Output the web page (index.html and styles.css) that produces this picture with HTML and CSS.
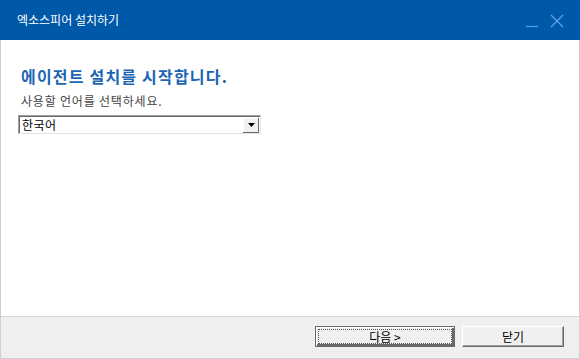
FILE: index.html
```html
<!DOCTYPE html>
<html>
<head>
	<meta charset="utf-8">
	<title>엑소스피어 설치하기</title>
	<link rel="stylesheet" href="styles.css">
</head>
<body>
	<div class="window">
		<div class="titlebar">
			<span class="title">엑소스피어 설치하기</span>
			<div class="controls">
				<svg class="ctl" width="14" height="14" viewBox="0 0 14 14"><line x1="1" y1="12.5" x2="13" y2="12.5" stroke="#5aa3ee" stroke-width="1.2"/></svg>
				<svg class="ctl" width="14" height="14" viewBox="0 0 14 14"><line x1="1" y1="1" x2="13" y2="13" stroke="#5aa3ee" stroke-width="1.3"/><line x1="13" y1="1" x2="1" y2="13" stroke="#5aa3ee" stroke-width="1.3"/></svg>
			</div>
		</div>
		<div class="body">
			<div class="content">
				<h1 class="heading">에이전트 설치를 시작합니다.</h1>
				<p class="hint">사용할 언어를 선택하세요.</p>
				<div class="dropdown">
					<span class="value">한국어</span>
					<span class="arrow"><svg width="7" height="4" viewBox="0 0 7 4"><polygon points="0,0 7,0 3.5,4" fill="#000"/></svg></span>
				</div>
			</div>
			<div class="footer">
				<button class="btn btn-default"><span class="focus">다음 &gt;</span></button>
				<button class="btn btn-close">닫기</button>
			</div>
		</div>
	</div>
</body>
</html>
```

FILE: styles.css
```css
body {
	margin: 0;
	background: #fff;
	font-family: "Noto Sans CJK KR", "Noto Sans", sans-serif;
}

.window {
	width: 580px;
	height: 359px;
	display: flex;
	flex-direction: column;
}

.titlebar {
	height: 40px;
	flex: none;
	background: #0058a9;
	display: flex;
	align-items: center;
	justify-content: space-between;
	padding: 0 16px 0 17px;
	box-sizing: border-box;
}

.title {
	color: #fff;
	font-size: 12px;
	padding-bottom: 1px;
}

.controls {
	display: flex;
	gap: 11px;
	padding-top: 1px;
}

.body {
	flex: 1;
	display: flex;
	flex-direction: column;
	border: 1px solid #cfcfcf;
	border-top: none;
}

.content {
	flex: 1;
	background: #fff;
	padding: 25px 0 0 17px;
}

.heading {
	margin: 0 0 0 3px;
	font-size: 16px;
	font-weight: bold;
	color: #1c64b4;
	line-height: 22px;
	letter-spacing: 1.2px;
}

.hint {
	margin: 6px 0 0 3px;
	font-size: 12px;
	color: #444;
	line-height: 16px;
	letter-spacing: 0.8px;
}

.dropdown {
	margin-top: 6px;
	width: 243px;
	height: 19px;
	box-sizing: border-box;
	border-top: 1px solid #a0a0a0;
	border-left: 1px solid #a0a0a0;
	border-right: 1px solid #e3e3e3;
	border-bottom: 1px solid #e3e3e3;
	box-shadow: inset 1px 1px 0 #696969;
	display: flex;
	align-items: center;
	justify-content: space-between;
	background: #fff;
}

.value {
	font-size: 12px;
	color: #000;
	padding-left: 3px;
	line-height: 16px;
	letter-spacing: 0.5px;
}

.arrow {
	width: 16px;
	height: 15px;
	margin-right: 1px;
	margin-top: 1px;
	background: #f0f0f0;
	box-shadow: inset -1px -1px 0 #696969, inset 1px 1px 0 #fff;
	display: flex;
	align-items: center;
	justify-content: center;
}

.footer {
	height: 42px;
	flex: none;
	background: #efefef;
	border-top: 1px solid #d6d6d6;
	display: flex;
	justify-content: flex-end;
	align-items: flex-start;
	padding: 9px 15px 0 0;
	gap: 7px;
	box-sizing: border-box;
}

.btn {
	height: 21px;
	padding: 0;
	margin: 0;
	font-family: "Noto Sans CJK KR", sans-serif;
	font-size: 12px;
	color: #000;
	background: #f0f0f0;
	box-sizing: border-box;
	border: 1px solid;
	border-color: #fff #696969 #696969 #fff;
	box-shadow: inset -1px -1px 0 #a0a0a0;
}

.btn-default {
	width: 140px;
	border: 1px solid #696969;
	box-shadow: inset 1px 1px 0 #fff, inset -2px -2px 0 #696969;
	padding: 2px;
}

.focus {
	display: block;
	height: 15px;
	line-height: 14px;
	border: 1px dotted #555;
	box-sizing: border-box;
}

.btn-close {
	width: 102px;
	line-height: 17px;
}
```
